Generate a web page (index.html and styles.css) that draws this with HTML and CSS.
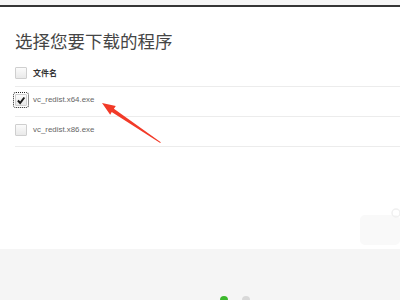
FILE: index.html
```html
<!DOCTYPE html>
<html lang="zh-CN">
<head>
<meta charset="utf-8">
<link rel="stylesheet" href="styles.css">
</head>
<body>
<div class="page">
  <div class="topbar"></div>
  <div class="content">
    <h1 class="title">选择您要下载的程序</h1>
    <div class="list">
      <div class="row head">
        <span class="cb"></span>
        <span class="label bold">文件名</span>
      </div>
      <div class="row">
        <span class="cb checked focus">
          <svg viewBox="0 0 12 12" width="11" height="11"><path d="M2.3 6 L5 9 L10 2.4" fill="none" stroke="#1a1a1a" stroke-width="2.4"/></svg>
        </span>
        <span class="label">vc_redist.x64.exe</span>
      </div>
      <div class="row">
        <span class="cb"></span>
        <span class="label">vc_redist.x86.exe</span>
      </div>
    </div>
    <svg class="watermark" viewBox="0 0 40 40" width="40" height="40"><rect x="0" y="10" width="40" height="30" rx="5" fill="#f9f9f9"/><circle cx="36" cy="8" r="4" fill="none" stroke="#f0f0f0" stroke-width="1.5"/></svg>
  </div>
  <div class="footer">
    <span class="dot on"></span>
    <span class="dot"></span>
  </div>
  <svg class="arrow" viewBox="0 0 400 300" width="400" height="300">
    <polygon points="102,103 115.8,106 113.9,108.7 160.8,142.3 160.2,143.1 111.7,111.9 110.2,114.8" fill="#f23a28"/>
  </svg>
</div>
</body>
</html>
```
FILE: styles.css
```css
html, body {
  margin: 0;
  padding: 0;
  background: #fff;
}
.page {
  position: relative;
  width: 400px;
  height: 300px;
  display: flex;
  flex-direction: column;
  overflow: hidden;
  font-family: "Liberation Sans", "Noto Sans CJK SC", sans-serif;
}
.topbar {
  height: 5px;
  background: #f5f5f5;
  border-bottom: 2px solid #353535;
}
.content {
  position: relative;
  flex: 1;
  padding-left: 15px;
}
.title {
  margin: 22px 0 0 0;
  font-family: "Noto Sans CJK SC", sans-serif;
  font-weight: 400;
  font-size: 17.5px;
  line-height: 24px;
  color: #454545;
}
.list {
  margin-top: 9px;
}
.row {
  display: flex;
  align-items: center;
  gap: 6px;
  border-bottom: 1px solid #ececec;
  padding-bottom: 3px;
  box-sizing: content-box;
  height: 26px;
}
.row.head {
  height: 21px;
}
.cb {
  width: 10px;
  height: 10px;
  border: 1px solid #cfcfcf;
  border-radius: 1px;
  background: linear-gradient(#fbfbfb, #e9e9e9);
  display: flex;
  align-items: center;
  justify-content: center;
  flex: none;
}
.cb.focus {
  outline: 1px dotted #222;
  outline-offset: 1px;
}
.cb svg {
  display: block;
}
.label {
  font-size: 7.9px;
  color: #666;
  line-height: 10px;
}
.label.bold {
  font-family: "Noto Sans CJK SC", sans-serif;
  font-weight: 700;
  font-size: 8px;
  color: #333;
}
.watermark {
  position: absolute;
  right: 0;
  top: 198px;
}
.footer {
  height: 51px;
  background: #f5f5f5;
  display: flex;
  align-items: flex-start;
  gap: 14px;
  padding-left: 220px;
  padding-top: 47px;
  box-sizing: border-box;
}
.dot {
  width: 8px;
  height: 8px;
  border-radius: 50%;
  background: #d8d8d8;
  flex: none;
}
.dot.on {
  background: #3cb82c;
}
.arrow {
  position: absolute;
  left: 0;
  top: 0;
  pointer-events: none;
}
```
